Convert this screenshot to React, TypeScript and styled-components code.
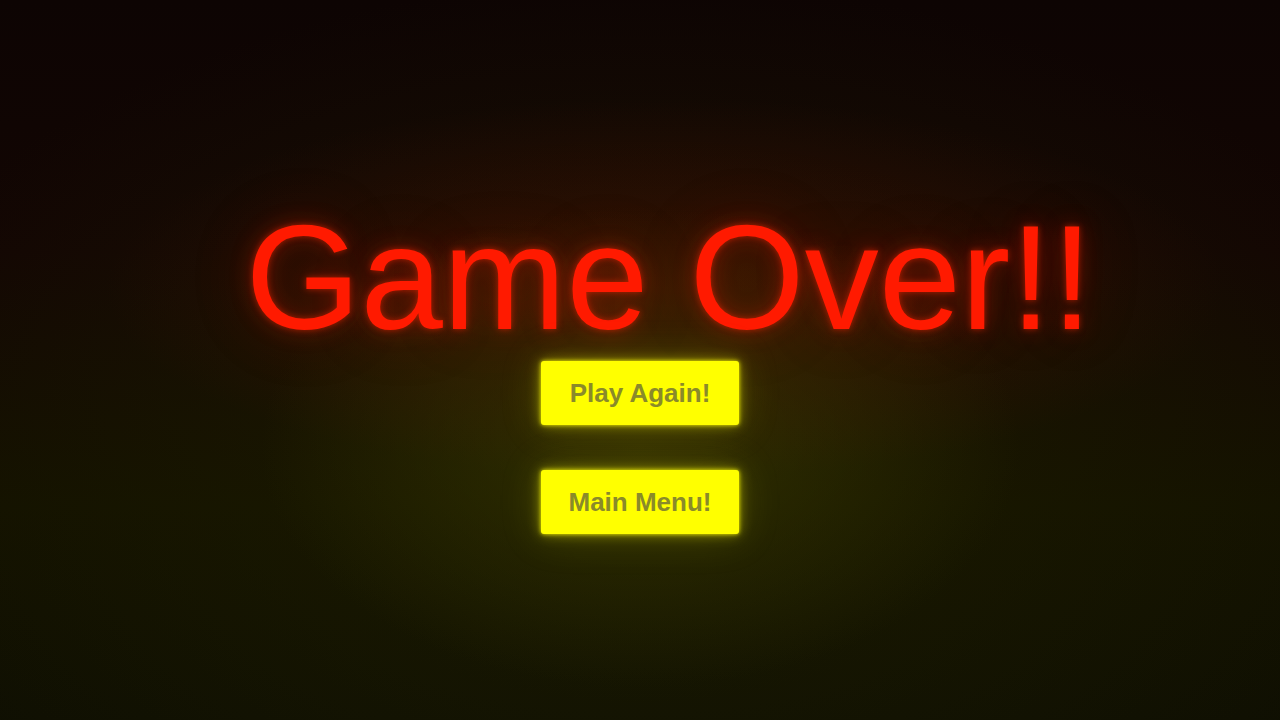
import React from "react";
import styled, { createGlobalStyle } from "styled-components";

const GlobalStyle = createGlobalStyle`
  html, body {
    margin: 0;
    padding: 0;
    height: 100%;
    background: #0d0403;
  }
  #root {
    height: 100%;
  }
`;

const Screen = styled.main`
  box-sizing: border-box;
  width: 100vw;
  height: 100vh;
  padding-top: 17px;
  overflow: hidden;
  display: flex;
  flex-direction: column;
  align-items: center;
  justify-content: center;
  font-family: "Liberation Sans", Arial, sans-serif;
  background:
    radial-gradient(ellipse 380px 240px at 50% 62%, rgba(70, 70, 0, 0.5), rgba(70, 70, 0, 0) 100%),
    radial-gradient(ellipse 560px 190px at 52% 40%, rgba(90, 20, 0, 0.45), rgba(90, 20, 0, 0) 100%),
    radial-gradient(ellipse 820px 480px at 50% 64%, rgba(36, 36, 0, 0.5), rgba(36, 36, 0, 0) 100%),
    linear-gradient(180deg, #0d0403 0%, #130603 35%, #131100 70%, #0f0f02 100%);
`;

const Title = styled.h1`
  margin: 0 0 8px 58px;
  font-size: 148px;
  line-height: 150px;
  font-weight: 400;
  color: #ff1a00;
  white-space: nowrap;
  text-shadow:
    0 0 6px rgba(255, 40, 0, 0.55),
    0 0 22px rgba(255, 30, 0, 0.35),
    0 0 60px rgba(200, 30, 0, 0.25);
`;

const Menu = styled.nav`
  display: flex;
  flex-direction: column;
  gap: 45px;
`;

const MenuButton = styled.button`
  width: 198px;
  height: 64px;
  border: none;
  border-radius: 3px;
  background: #ffff00;
  color: #8a8a2a;
  font-family: "Liberation Sans", Arial, sans-serif;
  font-weight: 700;
  font-size: 26px;
  padding: 0;
  cursor: pointer;
  box-shadow:
    0 0 4px rgba(255, 255, 0, 0.9),
    0 0 14px rgba(255, 255, 0, 0.45),
    0 0 40px rgba(200, 200, 0, 0.22);
`;

export default function App() {
  return (
    <>
      <GlobalStyle />
      <Screen>
        <Title>Game Over!!</Title>
        <Menu>
          <MenuButton>Play Again!</MenuButton>
          <MenuButton>Main Menu!</MenuButton>
        </Menu>
      </Screen>
    </>
  );
}
